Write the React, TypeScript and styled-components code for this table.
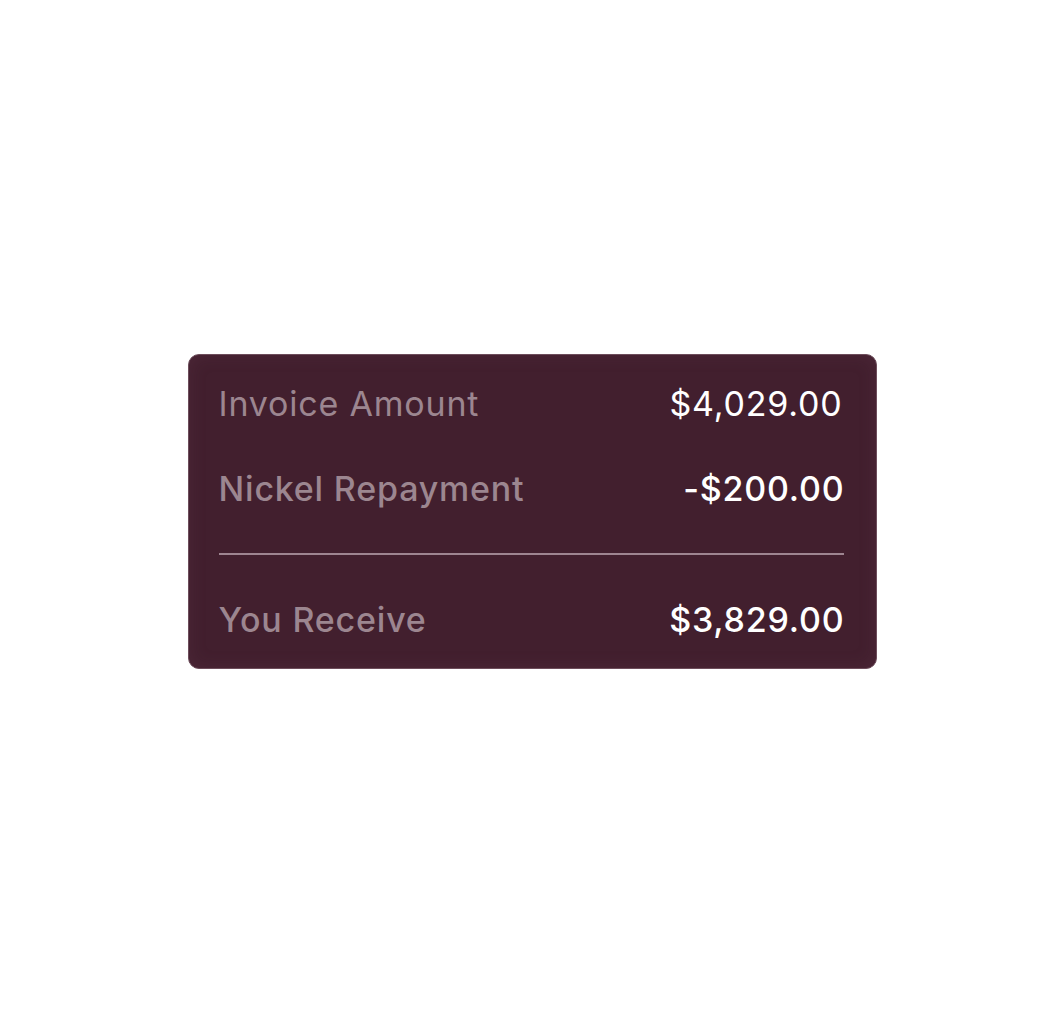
import React from 'react';
import styled, {createGlobalStyle} from 'styled-components';

const GlobalStyle = createGlobalStyle`
  html, body {
    margin: 0;
    padding: 0;
    background: #ffffff;
  }
  body {
    font-family: Inter, "Noto Sans", sans-serif;
  }
`;

const Page = styled.div`
  width: 100%;
  height: 1022px;
  display: flex;
  align-items: center;
  justify-content: center;
`;

const Card = styled.div`
  width: 689px;
  box-sizing: border-box;
  background-color: #421f2e;
  border: 1px solid #6d4d5b;
  border-radius: 11px;
  padding: 28px 31px 28px 30px;
  display: flex;
  flex-direction: column;
  gap: 44px;
  box-shadow: inset 0 0 18px rgba(120, 80, 100, 0.18);
`;

const Row = styled.div`
  display: flex;
  justify-content: space-between;
  align-items: baseline;
  font-size: 34px;
  line-height: 41px;
  letter-spacing: 0.8px;
`;

const Label = styled.span<{weight?: number}>`
  color: #9c8690;
  font-weight: ${props => props.weight || 400};
`;

const Value = styled.span<{weight?: number; nudge?: number}>`
  color: #ffffff;
  font-weight: ${props => props.weight || 400};
  margin-right: ${props => props.nudge || 0}px;
`;

const Divider = styled.div`
  height: 2px;
  margin-right: 1px;
  background-color: #9e8591;
`;

const App = () => {
  return (
    <Page>
      <GlobalStyle />
      <Card>
        <Row>
          <Label>Invoice Amount</Label>
          <Value nudge={2}>$4,029.00</Value>
        </Row>
        <Row>
          <Label weight={500}>Nickel Repayment</Label>
          <Value weight={500}>-$200.00</Value>
        </Row>
        <Divider />
        <Row>
          <Label weight={500}>You Receive</Label>
          <Value weight={500}>$3,829.00</Value>
        </Row>
      </Card>
    </Page>
  );
};

export default App;
